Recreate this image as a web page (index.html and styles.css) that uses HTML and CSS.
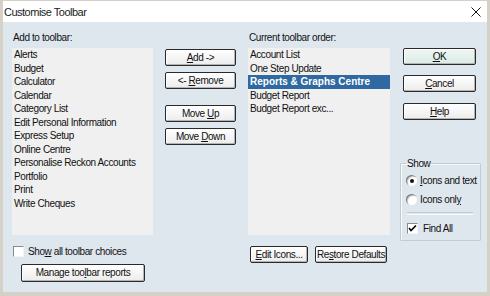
FILE: index.html
```html
<!DOCTYPE html>
<html>
<head>
<meta charset="utf-8">
<link rel="stylesheet" href="styles.css">
</head>
<body>
<div class="window">
  <div class="titlebar">
    <span class="title">Customise Toolbar</span>
    <svg class="close" width="10" height="10" viewBox="0 0 10 10"><path d="M0.5 0.5 L9.5 9.5 M9.5 0.5 L0.5 9.5" stroke="#111" stroke-width="1" fill="none"/></svg>
  </div>
  <div class="client">
    <div class="col col-add">
      <div class="label">Add to toolbar:</div>
      <ul class="list">
        <li>Alerts</li>
        <li>Budget</li>
        <li>Calculator</li>
        <li>Calendar</li>
        <li>Category List</li>
        <li>Edit Personal Information</li>
        <li>Express Setup</li>
        <li>Online Centre</li>
        <li>Personalise Reckon Accounts</li>
        <li>Portfolio</li>
        <li>Print</li>
        <li>Write Cheques</li>
      </ul>
      <div class="check-row show-all"><span class="box"></span><span>Sho<u>w</u> all toolbar choices</span></div>
      <button class="btn manage">Manage too<u>l</u>bar reports</button>
    </div>
    <div class="col col-move">
      <button class="btn"><u>A</u>dd -&gt;</button>
      <button class="btn">&lt;- <u>R</u>emove</button>
      <button class="btn gap-big">Move <u>U</u>p</button>
      <button class="btn">Move <u>D</u>own</button>
    </div>
    <div class="col col-current">
      <div class="label">Current toolbar order:</div>
      <ul class="list">
        <li>Account List</li>
        <li>One Step Update</li>
        <li class="selected">Reports &amp; Graphs Centre</li>
        <li>Budget Report</li>
        <li>Budget Report exc...</li>
      </ul>
      <div class="btn-row">
        <button class="btn edit-icons"><u>E</u>dit Icons...</button>
        <button class="btn restore">Re<u>s</u>tore Defaults</button>
      </div>
    </div>
    <div class="col col-dialog">
      <button class="btn default"><u>O</u>K</button>
      <button class="btn cancel"><u>C</u>ancel</button>
      <button class="btn help"><u>H</u>elp</button>
      <fieldset class="group">
        <legend>Show</legend>
        <div class="opt-row first"><span class="radio checked"></span><span><u>I</u>cons and text</span></div>
        <div class="opt-row second"><span class="radio"></span><span>Icons onl<u>y</u></span></div>
        <div class="sep"></div>
        <div class="opt-row third"><span class="box checked">
          <svg width="9" height="9" viewBox="0 0 9 9"><path d="M1 4 L3 6.5 L8 1.5" stroke="#000" stroke-width="1.6" fill="none"/></svg>
        </span><span>Find All</span></div>
      </fieldset>
    </div>
  </div>
</div>
</body>
</html>
```

FILE: styles.css
```css
body {
  margin: 0;
}

.window {
  width: 490px;
  height: 296px;
  box-sizing: border-box;
  background: #d5d1c7;
  padding: 1px 3px 4px 3px;
  display: flex;
  flex-direction: column;
  font-family: "Liberation Sans", Arial, sans-serif;
  font-size: 10px;
  letter-spacing: -0.4px;
  color: #111;
}

.titlebar {
  flex: none;
  height: 21px;
  background: #fff;
  display: flex;
  align-items: center;
  justify-content: space-between;
}

.title {
  margin-left: 1px;
  font-size: 11px;
  letter-spacing: -0.5px;
  color: #222;
}

.close {
  margin-right: 6px;
}

.client {
  flex: 1;
  background: #dfe7ee;
  display: flex;
  align-items: flex-start;
  padding-top: 9px;
}

.col {
  display: flex;
  flex-direction: column;
  align-items: flex-start;
}

.label {
  line-height: 13px;
  height: 13px;
  padding-left: 1px;
}

.list {
  list-style: none;
  margin: 4px 0 0 0;
  padding: 0;
  height: 187px;
  width: 100%;
  background: #f0f0f0;
  box-sizing: border-box;
}

.list li {
  line-height: 13.5px;
  height: 13.5px;
  padding-left: 2px;
  white-space: nowrap;
}

.list li.selected {
  background: #2f69a1;
  color: #fff;
  font-weight: bold;
  letter-spacing: 0;
}

.col-add {
  margin-left: 9px;
  width: 141px;
}

.col-move {
  margin-left: 12px;
  width: 71px;
  margin-top: 18px;
}

.col-current {
  margin-left: 12px;
  width: 142px;
}

.col-dialog {
  margin-left: 10px;
  width: 81px;
  margin-top: 17px;
}

.btn {
  font: inherit;
  letter-spacing: inherit;
  color: #111;
  height: 17px;
  padding: 0;
  margin: 0;
  box-sizing: border-box;
  border: 1px solid #2a2a2a;
  border-radius: 2px;
  background: linear-gradient(#ffffff, #ececec);
  box-shadow: inset -1px -1px #b4b4b4, inset 1px 1px #fff;
  text-align: center;
  line-height: 15px;
  white-space: nowrap;
}

.col-move .btn {
  width: 71px;
  margin-bottom: 6px;
}

.col-move .gap-big {
  margin-top: 10px;
}

.col-dialog .btn {
  width: 73px;
  margin-left: 3px;
}

.col-dialog .cancel {
  margin-top: 10px;
}

.col-dialog .help {
  margin-top: 11px;
}

.btn.default {
  background: linear-gradient(#eef7f4, #dcebe6);
}

.check-row {
  display: flex;
  align-items: center;
  height: 13px;
  line-height: 13px;
  gap: 4px;
}

.show-all {
  margin-top: 10px;
  margin-left: 1px;
}

.box {
  width: 11px;
  height: 11px;
  box-sizing: border-box;
  background: #fff;
  border: 1px solid;
  border-color: #8a8a8a #f4f4f4 #f4f4f4 #8a8a8a;
  display: flex;
  align-items: center;
  justify-content: center;
  flex: none;
}

.manage {
  margin-top: 6px;
  margin-left: 9px;
  width: 124px;
  height: 18px;
  line-height: 16px;
}

.btn-row {
  display: flex;
  margin-top: 11px;
  margin-left: 2px;
  gap: 7px;
}

.edit-icons {
  width: 58px;
}

.restore {
  width: 72px;
}

.group {
  margin: 37px 0 0 0;
  padding: 0 0 5px 0;
  width: 81px;
  box-sizing: border-box;
  border: 1px solid #c3cad1;
  box-shadow: inset 1px 1px #f7f9fb;
  border-radius: 1px;
}

.group legend {
  margin-left: 5px;
  padding: 0 1px;
  line-height: 13px;
  font-size: 10px;
}

.opt-row {
  display: flex;
  align-items: center;
  height: 13px;
  line-height: 13px;
  gap: 2px;
  margin-left: 5px;
}

.opt-row.first {
  margin-top: 4px;
}

.opt-row.second {
  margin-top: 6px;
}

.opt-row.third {
  margin-left: 6px;
  margin-top: 7px;
  gap: 5px;
}

.radio {
  position: relative;
  width: 11px;
  height: 11px;
  border-radius: 50%;
  background: #fff;
  box-shadow: inset 1px 1px #7d7d7d, inset 2px 2px #d0d0d0;
  flex: none;
  margin-right: 1px;
}

.radio.checked::after {
  content: "";
  position: absolute;
  left: 4px;
  top: 4px;
  width: 4px;
  height: 4px;
  border-radius: 50%;
  background: #111;
}

.sep {
  margin: 6px 0 0 6px;
  width: 66px;
  height: 1px;
  border-top: 1px solid #c3cad1;
  border-bottom: 1px solid #fbfcfd;
}
```
